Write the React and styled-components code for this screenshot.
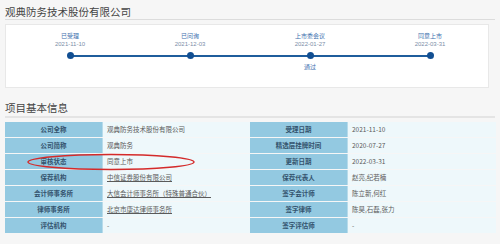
import React from "react";
import styled, { createGlobalStyle } from "styled-components";

const GlobalStyle = createGlobalStyle`
  html, body {
    margin: 0;
    padding: 0;
    background: #f6f6f6;
    font-family: "Noto Sans CJK SC", "Liberation Sans", sans-serif;
  }
`;

const Page = styled.div`
  width: 500px;
  height: 244px;
  padding: 0 5px;
  box-sizing: border-box;
  overflow: hidden;
`;

const Heading = styled.h2`
  margin: 0;
  padding-top: 4px;
  height: 15px;
  font-size: 10.5px;
  line-height: 15px;
  font-weight: 400;
  color: #444;
  border-bottom: 1px solid #dcdcdc;
`;

const TimelineBox = styled.div`
  margin: 4px 6px 0 0;
  height: 64px;
  background: #fff;
  border: 1px solid #e8e8e8;
  box-sizing: border-box;
`;

const Steps = styled.div`
  display: grid;
  grid-template-columns: repeat(4, 120px);
  margin-left: 4px;
  padding-top: 7px;
  position: relative;
`;

const Track = styled.div`
  position: absolute;
  left: 60px;
  width: 360px;
  top: 30px;
  height: 2px;
  background: #1f5d9c;
`;

const Step = styled.div`
  display: flex;
  flex-direction: column;
  align-items: center;
`;

const StepName = styled.div`
  font-size: 6px;
  line-height: 8px;
  color: #3c6fae;
`;

const StepDate = styled.div`
  font-size: 6px;
  line-height: 8px;
  color: #7c8ea8;
  font-family: "Liberation Sans", sans-serif;
`;

const Dot = styled.div`
  width: 7px;
  height: 7px;
  border-radius: 50%;
  background: #124f92;
  margin-top: 4px;
  z-index: 1;
`;

const StepNote = styled.div`
  font-size: 6px;
  line-height: 8px;
  margin-top: 4px;
  color: #3c6fae;
  min-height: 8px;
`;

const SectionHeading = styled(Heading)`
  margin-top: 12px;
  padding-top: 0;
  height: 16px;
  line-height: 16px;
  border-bottom: 2px solid #e4e4e4;
`;

const TableWrap = styled.div`
  position: relative;
  margin-top: 4px;
`;

const Table = styled.div`
  display: grid;
  grid-template-columns: 98px 147px 98px 148px;
  row-gap: 1px;
  background: #f6f6f6;
`;

const Cell = styled.div`
  height: 15px;
  line-height: 15px;
  font-size: 6.5px;
  overflow: hidden;
  white-space: nowrap;
  box-sizing: border-box;
  ${(p) =>
    p.$label
      ? `
    background: #93c9e1;
    color: #34536d;
    text-align: center;
    font-weight: 700;
    border-right: 1px solid #b7dbea;
  `
      : `
    background: #eef8fb;
    color: #5a5a5a;
    padding-left: 4px;
  `}
  ${(p) => (p.$link ? "text-decoration: underline;" : "")}
`;

const Ellipse = styled.svg`
  position: absolute;
  left: 19px;
  top: 31px;
  pointer-events: none;
`;

const steps = [
  { name: "已受理", date: "2021-11-10" },
  { name: "已问询", date: "2021-12-03" },
  { name: "上市委会议", date: "2022-01-27", note: "通过" },
  { name: "同意上市", date: "2022-03-31" },
];

const rows = [
  ["公司全称", "观典防务技术股份有限公司", false, "受理日期", "2021-11-10"],
  ["公司简称", "观典防务", false, "精选层挂牌时间", "2020-07-27"],
  ["审核状态", "同意上市", false, "更新日期", "2022-03-31"],
  ["保荐机构", "中信证券股份有限公司", true, "保荐代表人", "赵亮,纪若楠"],
  ["会计师事务所", "大信会计师事务所（特殊普通合伙）", true, "签字会计师", "陈立新,何红"],
  ["律师事务所", "北京市康达律师事务所", true, "签字律师", "陈昊,石磊,张力"],
  ["评估机构", "-", false, "签字评估师", "-"],
];

export default function App() {
  return (
    <Page>
      <GlobalStyle />
      <Heading>观典防务技术股份有限公司</Heading>
      <TimelineBox>
        <Steps>
          <Track />
          {steps.map((s) => (
            <Step key={s.name}>
              <StepName>{s.name}</StepName>
              <StepDate>{s.date}</StepDate>
              <Dot />
              <StepNote>{s.note}</StepNote>
            </Step>
          ))}
        </Steps>
      </TimelineBox>
      <SectionHeading>项目基本信息</SectionHeading>
      <TableWrap>
        <Table>
          {rows.map(([l1, v1, link, l2, v2]) => (
            <React.Fragment key={l1}>
              <Cell $label>{l1}</Cell>
              <Cell $link={link}>{v1}</Cell>
              <Cell $label>{l2}</Cell>
              <Cell>{v2}</Cell>
            </React.Fragment>
          ))}
        </Table>
        <Ellipse width="174" height="18" viewBox="0 0 174 18">
          <ellipse cx="87" cy="9" rx="83" ry="7.5" fill="none" stroke="#d42a2a" strokeWidth="1.4" />
        </Ellipse>
      </TableWrap>
    </Page>
  );
}
